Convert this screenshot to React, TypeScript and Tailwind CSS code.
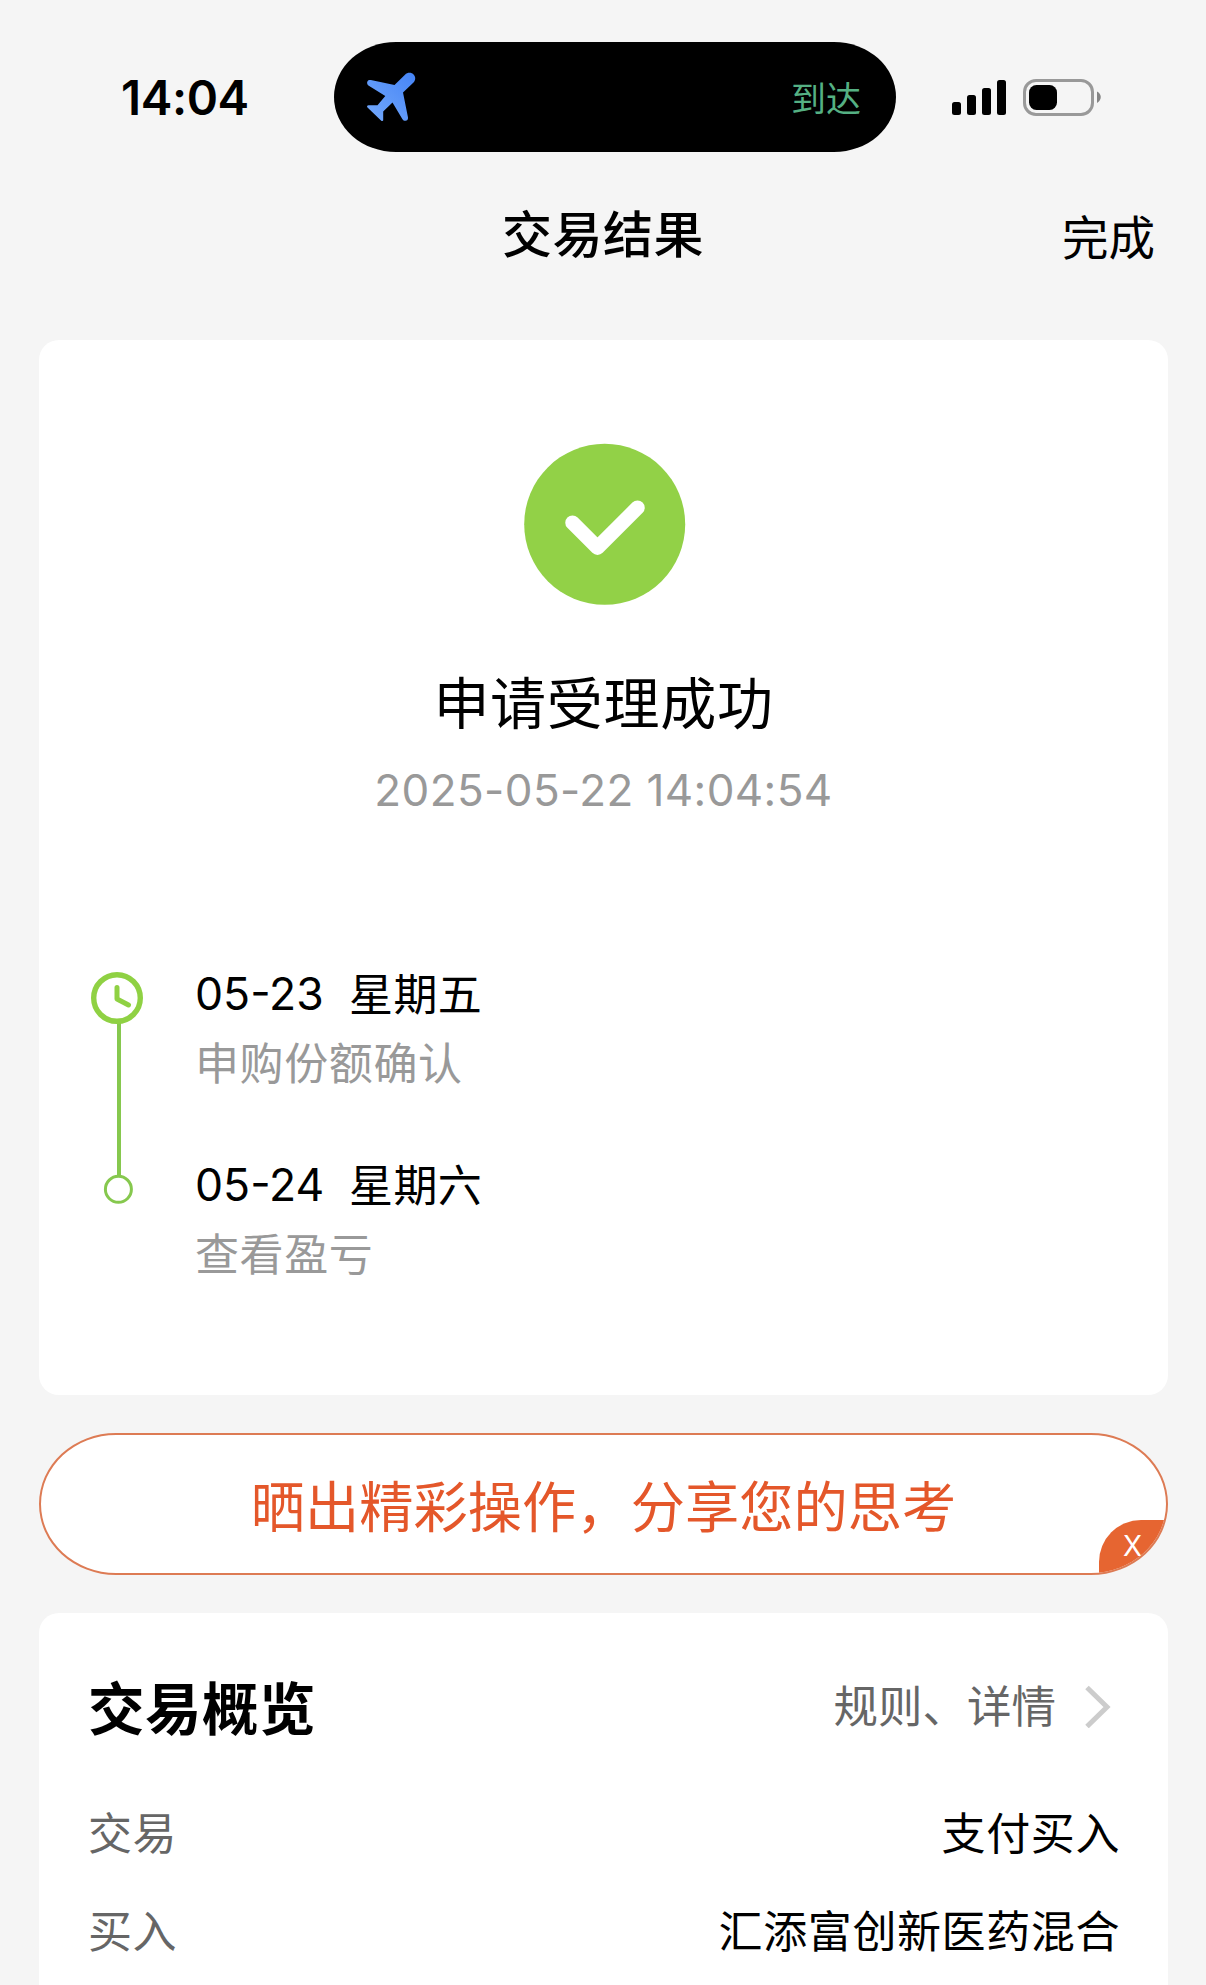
import type { ReactNode } from 'react';

const cjk = "font-['Noto_Sans_CJK_SC',sans-serif]";
const latin = "font-['Inter',sans-serif]";

function StatusBar() {
  return (
    <div className="flex h-[152px] shrink-0 pt-[42px]">
      <div className="flex w-[334px] items-center pl-[121px]">
        <span className="pt-[2px] font-['Inter',sans-serif] text-[47.5px] leading-[110px] font-semibold tracking-[-0.4px] whitespace-nowrap">
          14:04
        </span>
      </div>
      <div className="flex h-[110px] w-[562px] items-center justify-between rounded-[62px/55px] bg-black pr-[35px] pl-[32px]">
        <svg width="50" height="50" viewBox="0 0 50 50">
          <defs>
            <linearGradient id="plane" x1="1" y1="0" x2="0" y2="1">
              <stop offset="0" stopColor="#4584f6" />
              <stop offset="1" stopColor="#74a9fb" />
            </linearGradient>
          </defs>
          <path
            fill="url(#plane)"
            d="M28.500 13 L39 2.800 C41.500 .2 45.500 .2 47.800 2.800 C50 5.300 49.500 8.500 47.500 10.500 L37 20.500 L42 45.500 C42.300 47.500 41 48.800 39.500 48.800 C38 48.800 37 48.300 36.300 47 L26.500 30.500 L17.200 39.500 L17.200 48 C17.200 49.200 15.800 49.300 15 48.500 L1.500 35.500 C.6 34.500 1.200 33.300 2.500 33.300 L11.500 33.300 L19.300 24 L3.200 14 C1.500 13 .8 11.500 1.200 10 C1.600 8.200 3 7.700 4.800 8 Z"
          />
        </svg>
        <span className="font-['Noto_Sans_CJK_SC',sans-serif] text-[35px] leading-[48px] text-[#55b083]">到达</span>
      </div>
      <div className="flex h-[73px] items-end pl-[56px]">
        <svg width="54" height="35" viewBox="0 0 54 35">
          <rect x="0" y="22" width="9" height="13" rx="2.5" />
          <rect x="15" y="15" width="9" height="20" rx="2.5" />
          <rect x="30" y="8" width="9" height="27" rx="2.5" />
          <rect x="45" y="0" width="9" height="35" rx="2.5" />
        </svg>
        <svg className="-mb-px ml-[17px]" width="79" height="37" viewBox="0 0 79 37">
          <rect x="1.500" y="1.500" width="68" height="34" rx="11.500" fill="none" stroke="#999" strokeWidth="3" />
          <rect x="6" y="6" width="28" height="25" rx="7.500" />
          <path d="M74 12.500 C79 15 79 21 74 24 Z" fill="#858585" />
        </svg>
      </div>
    </div>
  );
}

function NavBar() {
  return (
    <div className="grid h-[188px] shrink-0 grid-cols-[1fr_auto_1fr] items-start pt-[43px]">
      <span />
      <h1 className={`${cjk} text-[50px] leading-[72px] font-medium tracking-[0.5px]`}>交易结果</h1>
      <span className={`${cjk} pt-[4px] pr-[51px] text-right text-[46.500px] leading-[72px]`}>完成</span>
    </div>
  );
}

function Step({ date, day, note }: { date: string; day: string; note: string }) {
  return (
    <div className="h-[191px]">
      <div className="flex h-[60px] items-center">
        <span className={`${latin} w-[154px] pt-[3px] text-[44.500px] leading-[60px] whitespace-nowrap`}>{date}</span>
        <span className={`${cjk} text-[44px] leading-[60px] tracking-[0.4px]`}>{day}</span>
      </div>
      <div className={`${cjk} mt-[9px] text-[44px] leading-[60px] tracking-[0.6px] text-[#999]`}>{note}</div>
    </div>
  );
}

function ResultCard() {
  return (
    <section className="flex h-[1055px] shrink-0 flex-col items-center rounded-[20px] bg-white pt-[103px]">
      <svg className="ml-[2px]" width="162" height="162" viewBox="0 0 162 162">
        <circle cx="80.700" cy="81.300" r="80.500" fill="#92d147" />
        <path d="M48.500 79.700 L73.500 104.700 L113.500 64.700" fill="none" stroke="#fff" strokeWidth="14.500" strokeLinecap="round" strokeLinejoin="round" />
      </svg>
      <h2 className={`${cjk} mt-[55px] text-[56px] leading-[80px] tracking-[0.7px]`}>申请受理成功</h2>
      <p className={`${latin} mt-[20px] text-[44px] leading-[60px] tracking-[0.4px] text-[#999]`}>2025-05-22 14:04:54</p>
      <div className="mt-[142px] flex w-full pl-[51px]">
        <svg className="mt-[6px]" width="54" height="236" viewBox="0 0 54 236">
          <rect x="27" y="50" width="4" height="158" fill="#86c84e" />
          <circle cx="27" cy="30" r="23.300" fill="#fff" stroke="#8fd143" strokeWidth="5.400" />
          <path d="M27 19.500 V31 L38.500 37" fill="none" stroke="#8fd143" strokeWidth="5" strokeLinecap="round" strokeLinejoin="round" />
          <circle cx="28.400" cy="221.300" r="13" fill="#fff" stroke="#86c84e" strokeWidth="3" />
        </svg>
        <div className="pl-[51px]">
          <Step date="05-23" day="星期五" note="申购份额确认" />
          <Step date="05-24" day="星期六" note="查看盈亏" />
        </div>
      </div>
    </section>
  );
}

function ShareButton() {
  return (
    <div className="relative mt-[38px] flex h-[142px] shrink-0 items-center justify-center overflow-hidden rounded-[77px/71px] border-2 border-[#dd7b54] bg-white">
      <span className={`${cjk} text-[54.200px] leading-[76px] tracking-[0.1px] text-[#e4572a]`}>晒出精彩操作，分享您的思考</span>
      <span className="absolute right-[-2px] bottom-[-2px] flex h-[55px] w-[69px] items-center rounded-tl-[42px] bg-[#e66531] pb-[3px] pl-[24px] font-['Inter',sans-serif] text-[28px] text-white">
        X
      </span>
    </div>
  );
}

function Row({ label, children }: { label: string; children: ReactNode }) {
  return (
    <div className={`${cjk} flex h-[98px] shrink-0 items-center justify-between text-[44px] tracking-[0.6px]`}>
      <span className="text-[#666]">{label}</span>
      <span>{children}</span>
    </div>
  );
}

function OverviewCard() {
  return (
    <section className="mt-[38px] h-[400px] shrink-0 rounded-t-[20px] bg-white pr-[48px] pl-[49px]">
      <div className="flex h-[169px] items-center justify-between pt-[14px]">
        <h2 className={`${cjk} text-[56.500px] leading-[80px] font-bold tracking-[0.5px]`}>交易概览</h2>
        <div className="flex items-center pr-[8px]">
          <span className={`${cjk} -mt-[2px] text-[44.500px] leading-[60px] text-[#666]`}>规则、详情</span>
          <svg className="ml-[28px]" width="28" height="46" viewBox="0 0 28 46">
            <path d="M3 5.500 L23 25 L3 44.500" fill="none" stroke="#ccc" strokeWidth="5" />
          </svg>
        </div>
      </div>
      <Row label="交易">支付买入</Row>
      <Row label="买入">汇添富创新医药混合</Row>
    </section>
  );
}

export default function App() {
  return (
    <main className="flex h-[1985px] w-[1206px] flex-col overflow-hidden bg-[#f5f5f5] text-black">
      <StatusBar />
      <NavBar />
      <div className="flex flex-col pr-[38px] pl-[39px]">
        <ResultCard />
        <ShareButton />
        <OverviewCard />
      </div>
    </main>
  );
}
